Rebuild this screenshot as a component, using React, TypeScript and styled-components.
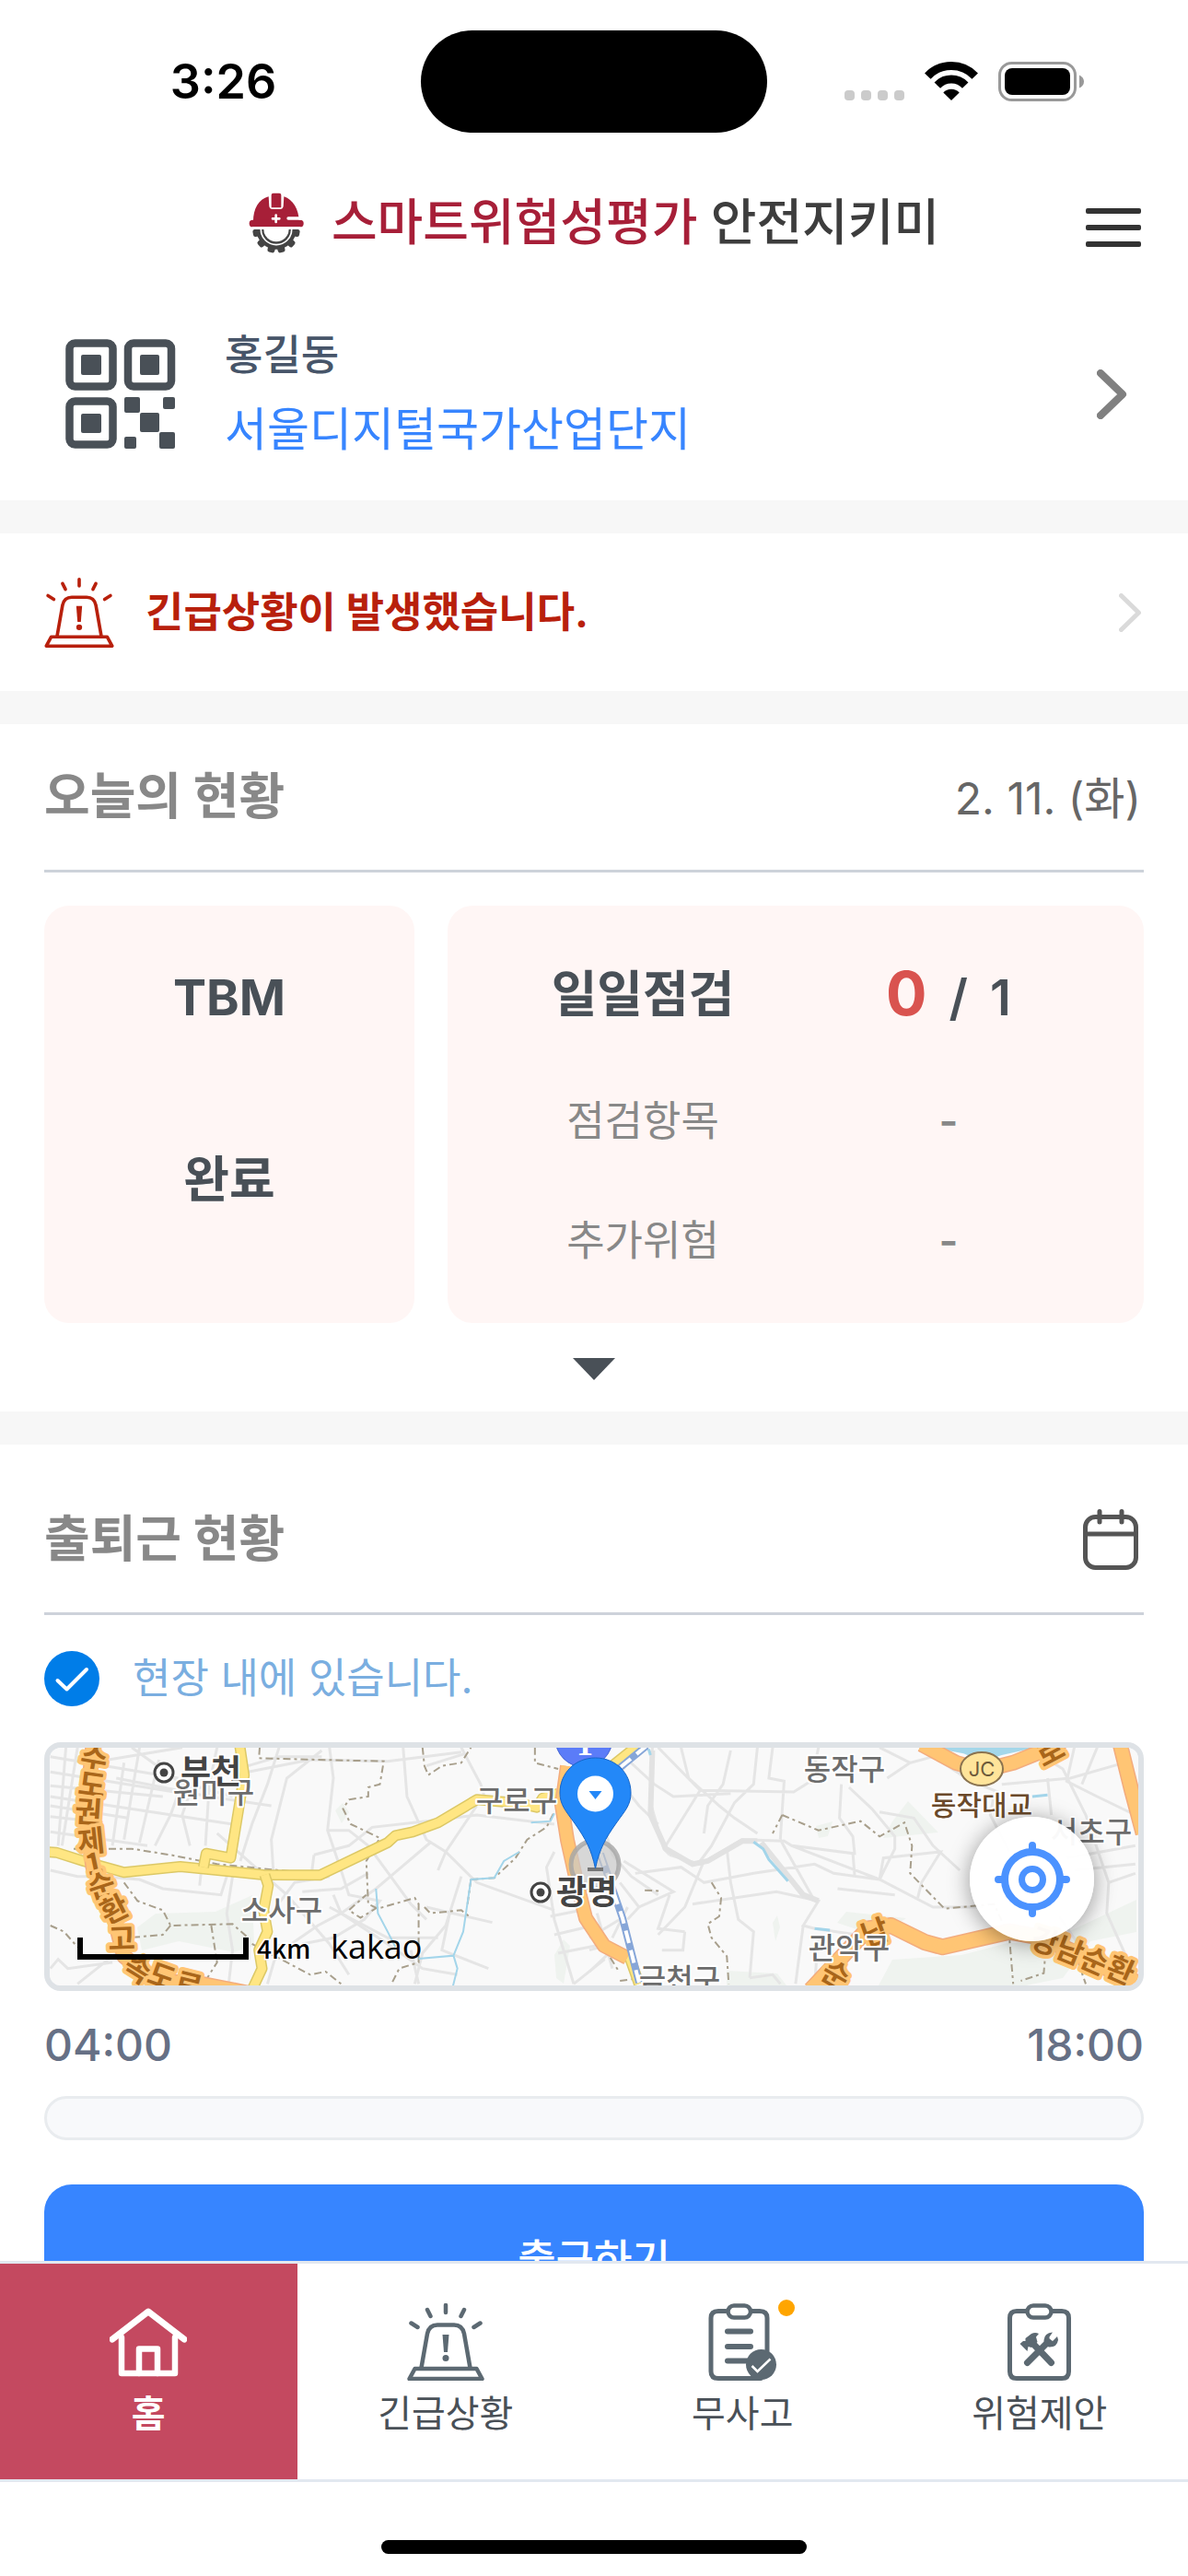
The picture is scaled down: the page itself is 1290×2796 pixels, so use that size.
import React from "react";
import styled, { createGlobalStyle } from "styled-components";

const sans = `"Inter", "Noto Sans CJK KR", sans-serif`;
const korean = `"Noto Sans CJK KR", sans-serif`;

const GlobalStyle = createGlobalStyle`
  *, *::before, *::after { box-sizing: border-box; }
  body { margin: 0; background: #fff; font-family: ${sans}; }
  h1, h2, p { margin: 0; }
  button { border: 0; padding: 0; background: none; font: inherit; color: inherit; cursor: pointer; }
  svg { display: block; flex: none; }
`;

/* ---------- shell ---------- */

const Screen = styled.div`
  display: flex;
  flex-direction: column;
  height: 100vh;
  background: #fff;
  overflow: hidden;
`;

const Content = styled.main`
  flex: 1;
  min-height: 0;
  overflow-y: auto;
  scrollbar-width: none;
`;

const StatusBar = styled.div`
  flex: none;
  display: grid;
  grid-template-columns: 1fr auto 1fr;
  align-items: center;
  height: 177px;
`;

const Clock = styled.time`
  padding-left: 28px;
  text-align: center;
  font-size: 52px;
  font-weight: 600;
  line-height: 64px;
  color: #000;
`;

const Island = styled.div`
  width: 376px;
  height: 111px;
  border-radius: 56px;
  background: #000;
`;

const StatusIcons = styled.div`
  display: flex;
  align-items: center;
  justify-content: flex-end;
  gap: 22px;
  padding-right: 112px;
`;

const AppHeader = styled.header`
  flex: none;
  display: grid;
  grid-template-columns: 1fr auto 1fr;
  align-items: center;
  height: 130px;
  padding: 0 48px;
`;

const Brand = styled.div`
  grid-column: 2;
  display: flex;
  align-items: center;
  gap: 30px;
`;

const BrandName = styled.h1`
  font-size: 54px;
  font-weight: 500;
  line-height: 72px;
  color: #3d3d3d;
  white-space: nowrap;
`;

const BrandAccent = styled.span`
  color: #a71f38;
`;

const MenuButton = styled.button`
  justify-self: end;
  padding: 9px 3px 0;
`;

/* ---------- sections ---------- */

const Section = styled.section`
  padding: 0 48px;
  & + & {
    border-top: 36px solid #f7f7f7;
  }
`;

const ProfileLink = styled.a`
  display: flex;
  align-items: center;
  gap: 53px;
  height: 236px;
  padding: 6px 18px 0 23px;
  text-decoration: none;
`;

const ProfileText = styled.div`
  flex: 1;
  padding-bottom: 4px;
  line-height: 80px;
`;

const UserName = styled.p`
  font-size: 45px;
  font-weight: 500;
  color: #475569;
`;

const SiteName = styled.p`
  font-size: 50px;
  font-weight: 400;
  color: #3785ff;
`;

const AlertLink = styled.a`
  display: flex;
  align-items: center;
  gap: 34px;
  height: 171px;
  padding-right: 2px;
  text-decoration: none;
  color: #b8200c;
`;

const AlertText = styled.span`
  flex: 1;
  font-size: 45px;
  font-weight: 700;
  line-height: 60px;
`;

const SectionHeader = styled.header<{ $spaced?: boolean }>`
  display: flex;
  align-items: center;
  justify-content: space-between;
  height: 161px;
  margin-top: ${(p) => (p.$spaced ? 24 : 0)}px;
  padding-right: 3px;
  border-bottom: 3px solid #cdd2da;
`;

const SectionTitle = styled.h2`
  font-size: 54px;
  font-weight: 700;
  line-height: 72px;
  color: #888;
`;

const DateText = styled.time`
  padding-top: 3px;
  font-size: 48px;
  line-height: 72px;
  color: #666;
`;

const IconButton = styled.button`
  padding: 0 3px;
`;

/* ---------- today cards ---------- */

const Cards = styled.div`
  display: grid;
  grid-template-columns: 402fr 756fr;
  gap: 36px;
  padding-top: 36px;
`;

const Card = styled.div<{ $rows: string; $columns: string }>`
  display: grid;
  grid-template-columns: ${(p) => p.$columns};
  grid-template-rows: ${(p) => p.$rows};
  align-items: center;
  justify-items: center;
  padding: 24px 46px;
  border-radius: 27px;
  background: #fff6f5;
`;

const CardTitle = styled.span`
  font-size: 54px;
  font-weight: 700;
  line-height: 72px;
  color: #495057;
`;

const CardItem = styled.span`
  font-size: 45px;
  line-height: 60px;
  color: #888;
`;

const CardValue = styled(CardItem)`
  font-weight: 600;
`;

const Tally = styled.span`
  display: flex;
  align-items: baseline;
  gap: 24px;
  font-size: 54px;
  font-weight: 600;
  line-height: 72px;
  color: #495057;
`;

const TallyDone = styled.span`
  font-size: 66px;
  font-weight: 700;
  color: #d9534f;
`;

const ExpandButton = styled.button`
  display: grid;
  place-items: center;
  width: 100%;
  height: 96px;
  padding-top: 3px;
`;

/* ---------- attendance ---------- */

const SiteStatus = styled.p`
  display: flex;
  align-items: center;
  gap: 36px;
  height: 138px;
  font-size: 45px;
  line-height: 60px;
  color: #7aaee0;
`;

const MapFrame = styled.div`
  position: relative;
  height: 270px;
  border: 6px solid #dee2e6;
  border-radius: 18px;
  background: #f9f9f9;
  overflow: hidden;
`;

const MapDrawing = styled.svg`
  width: 100%;
  height: 100%;
  font-family: ${korean};
`;

const LocateButton = styled.button`
  position: absolute;
  right: 48px;
  bottom: 48px;
  display: grid;
  place-items: center;
  width: 135px;
  height: 135px;
  border-radius: 50%;
  background: rgba(255, 255, 255, 0.96);
  box-shadow: 0 3px 24px rgba(0, 0, 0, 0.4);
`;

const Hours = styled.div`
  display: flex;
  align-items: center;
  justify-content: space-between;
  height: 114px;
  padding-top: 3px;
  font-size: 48px;
  font-weight: 500;
  line-height: 60px;
  color: #667085;
`;

const Track = styled.div`
  height: 48px;
  border: 3px solid #e9ecef;
  border-radius: 24px;
  background: #f8f9fb;
`;

const CheckInButton = styled.button`
  width: 100%;
  height: 164px;
  margin: 48px 0;
  border-radius: 30px;
  background: #3785ff;
  color: #fff;
  font-size: 45px;
  font-weight: 500;
  line-height: 60px;
`;

/* ---------- tab bar ---------- */

const TabBar = styled.nav`
  flex: none;
  display: grid;
  grid-template-columns: repeat(4, 1fr);
  height: 240px;
  border-top: 3px solid #e2e8f0;
  border-bottom: 3px solid #e2e8f0;
  background: #fff;
`;

const Tab = styled.a<{ $active?: boolean }>`
  display: flex;
  flex-direction: column;
  align-items: center;
  gap: 12px;
  padding-top: 43px;
  background: ${(p) => (p.$active ? "#c44960" : "transparent")};
  color: ${(p) => (p.$active ? "#fff" : "#5c6972")};
  text-decoration: none;
`;

const TabIcon = styled.span`
  position: relative;
`;

const TabLabel = styled.span<{ $active?: boolean }>`
  font-size: 40px;
  font-weight: ${(p) => (p.$active ? 700 : 400)};
  line-height: 48px;
  color: ${(p) => (p.$active ? "#fff" : "#495057")};
`;

const Badge = styled.span`
  position: absolute;
  top: -4px;
  left: 81px;
  width: 18px;
  height: 18px;
  border-radius: 50%;
  background: #ffa500;
`;

const HomeArea = styled.div`
  flex: none;
  display: flex;
  align-items: center;
  justify-content: center;
  height: 102px;
  padding-top: 39px;
`;

const HomeIndicator = styled.div`
  width: 462px;
  height: 15px;
  border-radius: 8px;
  background: #000;
`;

/* ---------- icons ---------- */

const CellDots = () => (
  <svg width="65" height="43" viewBox="0 0 65 43" fill="#cbcbcb" aria-hidden="true">
    {[0, 18, 36, 54].map((x) => (
      <rect key={x} x={x} y="31" width="11" height="11" rx="4" />
    ))}
  </svg>
);

const Wifi = () => (
  <svg width="58" height="43" viewBox="0 0 58 43" aria-hidden="true">
    <g fill="none" stroke="#000" strokeWidth="9">
      <path d="M3.3 15.6A35.5 35.5 0 0 1 54.7 15.6" />
      <path d="M13.8 25.6A21 21 0 0 1 44.2 25.6" />
    </g>
    <path d="M29 42L20.3 33.4A12 12 0 0 1 37.7 33.4Z" />
  </svg>
);

const Battery = () => (
  <svg width="94" height="43" viewBox="0 0 94 43" aria-hidden="true">
    <rect x="1.5" y="1.5" width="82" height="40" rx="13" fill="none" stroke="#999" strokeWidth="3" />
    <rect x="7" y="7" width="71" height="29" rx="8" />
    <path d="M88 14.5Q93 17 93 21.500T88 28.500Z" fill="#999" />
  </svg>
);

const HelmetLogo = () => (
  <svg width="60" height="66" viewBox="36 43 180 198" aria-hidden="true">
    <g fill="#a71f38">
      <path d="M51 136C51 98 68 64 101 56L103 88Q105 97 113 97H139Q147 97 149 88L151 56C180 66 200 98 200 136Z" />
      <path d="M110 92V51Q110 45 116 45H136Q142 45 142 51V92Z" />
      <rect x="38" y="132" width="177" height="23" rx="11" />
    </g>
    <path d="M125 117V139M114 128H136" stroke="#fff" strokeWidth="8" strokeLinecap="round" />
    <path d="M165 127H204" stroke="#fff" strokeWidth="10" strokeLinecap="round" />
    <g fill="#444">
      <path d="M61 163A65 65 0 0 0 191 163Z" />
      {[10, 43, 76, 104, 137, 170].map((angle) => (
        <rect key={angle} x="180" y="151" width="23" height="24" rx="7" transform={`rotate(${angle} 126 163)`} />
      ))}
    </g>
    <path d="M48 155H204V163H48Z" fill="#fff" />
    <path d="M76 163A50 50 0 0 0 176 163" fill="none" stroke="#fff" strokeWidth="5" />
    <path d="M85 162A41 41 0 0 0 167 162Z" fill="#fff" />
  </svg>
);

const MenuIcon = () => (
  <svg width="60" height="42" viewBox="0 0 60 42" fill="#333" aria-hidden="true">
    <rect width="60" height="6" rx="2" />
    <rect y="18" width="60" height="6" rx="2" />
    <rect y="36" width="60" height="6" rx="2" />
  </svg>
);

const QrIcon = () => (
  <svg width="120" height="120" viewBox="0 0 120 120" fill="#495057" aria-hidden="true">
    <g fill="none" stroke="#495057" strokeWidth="8.500">
      <rect x="4.500" y="4.500" width="47" height="47" rx="6" />
      <rect x="68" y="4.500" width="47" height="47" rx="6" />
      <rect x="4.500" y="67.500" width="47" height="47" rx="6" />
    </g>
    <rect x="17" y="17" width="22" height="22" rx="2" />
    <rect x="81" y="17" width="21" height="22" rx="2" />
    <rect x="17" y="81" width="22" height="21" rx="2" />
    <rect x="64" y="63" width="17" height="17" rx="2" />
    <rect x="106" y="63" width="13" height="13" rx="2" />
    <rect x="81" y="80" width="21" height="21" rx="2" />
    <rect x="64" y="106" width="13" height="13" rx="2" />
    <rect x="102" y="101" width="17" height="18" rx="2" />
  </svg>
);

const ChevronIcon = ({ width, height, weight, color }: { width: number; height: number; weight: number; color: string }) => (
  <svg width={width} height={height} viewBox={`0 0 ${width} ${height}`} aria-hidden="true">
    <path
      d={`M${weight / 2} ${weight / 2}L${width - weight / 2 - 1} ${height / 2}L${weight / 2} ${height - weight / 2}`}
      fill="none"
      stroke={color}
      strokeWidth={weight}
      strokeLinecap="round"
      strokeLinejoin="round"
    />
  </svg>
);

const SirenIcon = ({ size, weight }: { size: number; weight: number }) => (
  <svg width={size} height={size} viewBox="0 0 84 84" fill="none" stroke="currentColor" strokeWidth={weight} aria-hidden="true">
    <path strokeLinecap="round" d="M42 2V10M22 7L25.500 14M62 7L58.500 14M4.500 21.500L11.500 26M79.500 21.500L72.500 26" />
    <path d="M15.500 70L22 33Q24 23.500 33 23.500H51Q60 23.500 62 33L68.500 70" />
    <path d="M8.500 71H75.500L81.500 82H2.500Z" strokeLinejoin="round" />
    <path d="M38.500 34H45.500L44 53H40Z" fill="currentColor" stroke="none" />
    <circle cx="42" cy="59.500" r="3.500" fill="currentColor" stroke="none" />
  </svg>
);

const CaretDown = () => (
  <svg width="46" height="24" viewBox="0 0 46 24" fill="#495057" aria-hidden="true">
    <path d="M0 0H46L23 24Z" />
  </svg>
);

const CalendarIcon = () => (
  <svg width="60" height="66" viewBox="0 0 60 66" fill="none" stroke="#555" strokeWidth="5" strokeLinecap="round" aria-hidden="true">
    <rect x="2.500" y="8.500" width="55" height="55" rx="11" />
    <path d="M3 27H57M18 2.500V14M42 2.500V14" />
  </svg>
);

const CheckIcon = () => (
  <svg width="60" height="60" viewBox="0 0 60 60" aria-hidden="true">
    <circle cx="30" cy="30" r="30" fill="#007de8" />
    <path d="M14.500 32L24.500 41.500L46 20" fill="none" stroke="#fff" strokeWidth="4" strokeLinecap="round" strokeLinejoin="round" />
  </svg>
);

const TargetIcon = () => (
  <svg width="84" height="84" viewBox="0 0 84 84" fill="none" stroke="#4b92ff" strokeLinecap="round" aria-hidden="true">
    <circle cx="42" cy="42" r="30" strokeWidth="8" />
    <circle cx="42" cy="42" r="11.500" strokeWidth="7" />
    <path d="M42 5V11M42 73V79M5 42H11M73 42H79" strokeWidth="8" />
  </svg>
);

const HomeIcon = () => (
  <svg width="84" height="84" viewBox="0 0 84 84" fill="none" stroke="currentColor" strokeLinecap="round" strokeLinejoin="round" aria-hidden="true">
    <path d="M3 39L42 9L81 39" strokeWidth="7" />
    <path d="M13 37V76H71V37" strokeWidth="6.500" />
    <path d="M32 76V49.500H52V76" strokeWidth="6.500" />
  </svg>
);

const ReportIcon = () => (
  <svg width="84" height="84" viewBox="0 0 84 84" fill="none" stroke="currentColor" strokeWidth="5" strokeLinecap="round" aria-hidden="true">
    <path d="M24 8.500H16Q8 8.500 8 16V74Q8 81.500 16 81.500H62M53 8.500H61Q69 8.500 69 16V52" />
    <rect x="26.500" y="2.500" width="24.500" height="13" rx="6.500" strokeWidth="4.500" />
    <path d="M26 30.500H51M26 47H51M26 62.500H50" strokeWidth="6" />
    <circle cx="62.500" cy="66.500" r="16.500" fill="currentColor" stroke="none" />
    <path d="M52.500 68L58.500 74L72.500 60.500" stroke="#fff" strokeWidth="2.500" strokeLinecap="butt" />
  </svg>
);

const SuggestIcon = () => (
  <svg width="84" height="84" viewBox="0 0 84 84" fill="none" stroke="currentColor" strokeWidth="5" strokeLinecap="round" aria-hidden="true">
    <path d="M27 8.500H17Q9.500 8.500 9.500 16V74Q9.500 81.500 17 81.500H66Q73.500 81.500 73.500 74V16Q73.500 8.500 66 8.500H56" />
    <rect x="28.500" y="2.500" width="26" height="13" rx="6.500" strokeWidth="4.500" />
    <path d="M34 43L54.500 64.500M28.500 64.500L51 42" strokeWidth="7" />
    <path d="M20.500 44L24 41H26.500V38L33 33Q37 31 41 33L38 36.500L39.500 42L33 48L29.500 47L28.500 52Z" fill="currentColor" stroke="none" />
    <path
      d="M56 31.500Q47 32 46.500 40Q46.500 46 52 47.500Q61 48 62 39.500L61 36L56 41L52.500 38.500L52.500 36.500Z"
      fill="currentColor"
      stroke="none"
    />
  </svg>
);

/* ---------- map ---------- */

type Point = [number, number];
type Place = { name: string; x: number; y: number; size?: number; bold?: boolean; color?: string };
type RoadLetter = { char: string; x: number; y: number; angle: number };

const line = (points: Point[]) => "M" + points.map((p) => p.join(" ")).join("L");

const westStreets = [
  "M130 110L460 180M130 160L450 225M130 205L420 240M130 240L600 330M130 270L330 310M130 305L200 315M130 355L380 400M170 80L150 400M200 80L160 400M320 130L290 400M360 80L320 380M410 120L360 390M460 230L440 300L400 400M500 190L470 300L490 400M280 120L470 80M300 180L540 240L700 270M340 80L460 190L600 240M560 80L540 200L530 400",
  "M640 160L800 120L1000 125L1190 95M720 80L690 200L650 330L620 450M830 90L740 180L700 380L705 480M850 80L860 180L845 350L880 480M640 140L720 110L830 110M560 360L650 460L740 560L850 720L900 820",
  "M130 480L200 500L260 500L360 510L420 540L570 560L590 480M600 500L585 620L600 740L590 850M520 470L515 530M810 430L900 400L960 340L1100 320L1230 300L1430 330M810 430L805 480M845 350L900 350L950 400L1060 590L1100 640",
  "M1040 80L1050 240L1100 380L1150 420L1230 520L1430 610M1190 80L1240 200L1250 240M1100 140L1200 100M1110 390L970 540L880 620L820 660L740 730M1230 270L1150 420L1130 480M880 480L900 560L980 580L940 640L860 700L780 720M780 550L880 540L950 490M860 560L880 620L1000 720L1090 800L1180 820M1060 740L1080 850M1160 620L1140 740L1260 800",
  "M700 620L760 520L850 500M720 720L690 850M850 600L1000 700L1130 700M1100 600L1270 650M1190 500L1150 660L1090 750L1070 850M130 800L150 770L175 800L290 780M200 850L310 740M1430 420L1410 470L1430 640L1480 850M1420 630L1500 610M1430 690L1530 660M1440 750L1560 720M1480 850L1560 770",
];

const eastStreets = [
  "M165 80L160 260L195 410L210 430M100 120L170 200L220 240L370 230M60 160L130 270L180 330M130 80L60 200L30 300M240 80L260 180L340 270L380 310L440 360M180 80L290 220L535 225L580 190M290 220L230 340L200 400M370 90L350 200L310 270L300 360M440 80L430 200L380 260L320 400L290 450M480 80L470 180L510 190L500 380",
  "M210 430L290 460L400 380L510 385L530 400L760 510L900 600L1030 600M90 450L220 550L130 600M120 490L240 470L300 520L430 490L590 460L640 490L760 510M270 590L490 550L600 580L560 660L590 670L700 690M360 410L370 520L390 640L430 680L420 830M500 380L590 580M530 400L690 425L695 500M210 560L180 670L250 680M180 690L250 600L300 450M190 740L245 740L250 680",
  "M660 200L655 310L690 370L695 430M680 210L740 280L800 370L800 410L760 510M760 290L850 310L900 400L970 480M760 510L770 440L920 420L870 520L860 570M650 540L800 560M600 80L580 200M760 80L840 130L900 110M900 110L1000 190L1080 230M840 130L780 180",
  "M1080 200L1260 180L1400 130M1150 80L1240 150L1300 300L1360 520L1355 620L1420 800M1200 180L1210 300M1270 80L1250 190L1330 240L1430 300M1330 80L1290 200M1250 440L1430 400M1270 480L1430 460M1360 520L1430 490M1060 230L1050 300L1100 420M1280 720L1230 630",
  "M30 300L60 430L110 500L180 560M80 520L130 600L100 640M100 600L60 700M500 850L480 820L420 830M560 660L540 850M600 690L590 850M20 620L60 800M0 700L80 640M0 740L60 720M0 810L60 740",
];

const westBorders = [
  "M670 80L668 115L820 120L990 125L980 200L950 210L950 240L900 250L885 280L905 330L980 375L945 450L950 590L975 605L1070 570L1080 590L1080 780L1030 800L1010 850",
  "M975 600L930 635L900 610L945 560M1090 80L1095 140L1105 170L1140 140L1190 130L1215 80M1095 600L1110 620L1190 610L1210 630",
  "M190 410L340 410L440 430L560 460L800 490M320 520L355 580L420 610L440 660L600 655L640 700M545 660L560 780L530 840M440 660L420 690L330 700M130 660L165 680L200 730M650 720L800 820L840 810L880 850",
  "M1215 510L1275 505L1330 440L1360 380L1410 340L1430 290M1380 80L1380 130L1440 150M1215 510L1205 600",
];

const eastBorders = [
  "M505 300L600 350L710 320L760 370L825 325L845 400L840 490L930 605L1060 590L1100 700L1110 850",
  "M505 300L480 360M320 520L345 570L340 630L310 655L320 700L360 760L365 850M145 545L190 548M1195 740L1190 815L1130 840M1280 780L1300 850M55 765L75 805M80 840L110 835",
];

const westHighway = line([[240, 70], [222, 300], [240, 470], [290, 610], [320, 760], [400, 840], [520, 850], [640, 880]]);
const westAvenues = [
  line([[120, 420], [145, 422], [215, 450], [320, 487], [465, 468], [680, 495], [825, 496], [1000, 390], [1020, 367], [1065, 355], [1130, 325], [1230, 250], [1340, 262], [1385, 275], [1400, 245], [1440, 230]]),
  line([[618, 70], [630, 170], [595, 440], [532, 425], [525, 470]]),
  line([[683, 495], [692, 530], [680, 610], [690, 680], [668, 740], [676, 800], [650, 870]]),
];

const centralHighway = line([[562, 20], [556, 62], [562, 100], [572, 145], [582, 185], [602, 215], [627, 228]]);

const places: Place[] = [
  { name: "원미구", x: 178, y: 60 },
  { name: "부천", x: 175, y: 39, size: 36, bold: true, color: "#444" },
  { name: "구로구", x: 507, y: 69 },
  { name: "소사구", x: 252, y: 188 },
  { name: "광명", x: 583, y: 170, size: 36, bold: true, color: "#444" },
  { name: "금천구", x: 684, y: 263 },
  { name: "동작구", x: 863, y: 35 },
  { name: "동작대교", x: 1012, y: 73, size: 30, color: "#6b4a2b" },
  { name: "서초구", x: 1131, y: 103 },
  { name: "관악구", x: 868, y: 229 },
];

const roadLetters: RoadLetter[] = [
  { char: "수", x: 48, y: 12, angle: 10 },
  { char: "도", x: 46, y: 40, angle: 8 },
  { char: "권", x: 42, y: 69, angle: 4 },
  { char: "제", x: 45, y: 101, angle: -6 },
  { char: "1", x: 48, y: 125, angle: -12 },
  { char: "순", x: 56, y: 149, angle: -18 },
  { char: "환", x: 70, y: 175, angle: -26 },
  { char: "고", x: 78, y: 207, angle: -2 },
  { char: "속", x: 96, y: 240, angle: 32 },
  { char: "도", x: 122, y: 248, angle: 20 },
  { char: "로", x: 151, y: 257, angle: 14 },
  { char: "남", x: 896, y: 200, angle: -20 },
  { char: "순", x: 854, y: 246, angle: 30 },
  { char: "로", x: 1086, y: 4, angle: -28 },
  { char: "강", x: 1081, y: 210, angle: 18 },
  { char: "남", x: 1108, y: 220, angle: 22 },
  { char: "순", x: 1135, y: 231, angle: 24 },
  { char: "환", x: 1163, y: 241, angle: 24 },
];

const Road = ({ d, fill, edge, width }: { d: string; fill: string; edge: string; width: number }) => (
  <g fill="none" strokeLinejoin="round">
    <path d={d} stroke={edge} strokeWidth={width} vectorEffect="non-scaling-stroke" />
    <path d={d} stroke={fill} strokeWidth={width - 3} vectorEffect="non-scaling-stroke" />
  </g>
);

const Lines = ({ paths, color, width, dash }: { paths: string[]; color: string; width: number; dash?: string }) => (
  <g fill="none" stroke={color} strokeWidth={width} strokeDasharray={dash}>
    {paths.map((d) => (
      <path key={d} d={d} vectorEffect="non-scaling-stroke" />
    ))}
  </g>
);

const CityMark = ({ x, y }: { x: number; y: number }) => (
  <g>
    <circle cx={x} cy={y} r="10" fill="#fff" stroke="#444" strokeWidth="3" />
    <circle cx={x} cy={y} r="4.500" fill="#444" />
  </g>
);

const SiteMap = () => (
  <MapDrawing viewBox="0 0 1182 258" preserveAspectRatio="xMidYMid slice" role="img" aria-label="현장 지도">
    <rect width="1182" height="258" fill="#f9f9f9" />

    {/* parks */}
    <g fill="#eff3ef">
      <path d="M95 195L115 180L180 178L220 160L222 215L200 222L140 210L100 220Z" />
      <path d="M310 68L318 60L325 70L317 82ZM548 225L558 208L565 215L558 256L550 250Z" />
      <path d="M832 85L850 80L845 96L835 98ZM915 80L932 58L965 92L905 98ZM855 190L865 178L930 185L900 205ZM785 190L790 182L793 195L788 210Z" />
      <path d="M735 242L790 245L800 258H735ZM900 258L915 230L990 225L1040 212L1080 212L1180 165V200L1130 210L1100 250L1060 258Z" />
    </g>

    <g transform="translate(-54 -27) scale(0.4209 0.3333)">
      <Lines paths={westStreets} color="#e5e5e5" width={3} />
      <Lines paths={westBorders} color="#a89f8c" width={2} dash="8 4 3 4" />
      <Lines
        paths={["M970 540L975 620L1000 680L1020 730M1080 768L1170 758L1180 800L1168 860M1170 758L1195 680L1215 510L1275 505L1300 450L1340 420M1370 325L1420 320L1430 295"]}
        color="#a3d5ea"
        width={2}
      />
      {westAvenues.map((d) => (
        <Road key={d} d={d} fill="#ffe683" edge="#dcc866" width={12} />
      ))}
      <Road d={westHighway} fill="#ffc574" edge="#f3ac7d" width={17} />
    </g>

    <g transform="translate(586 -27) scale(0.4146 0.3333)">
      <Lines paths={eastStreets} color="#e5e5e5" width={3} />
      <Lines paths={["M165 90L160 300L200 410L270 460L310 450L400 385L440 385M450 390L560 560L600 580"]} color="#e2e2e2" width={6} />
      <Lines paths={eastBorders} color="#a89f8c" width={2} dash="8 4 3 4" />
      <Lines paths={["M430 388L455 410L470 445L520 515M590 670L630 675M1160 240L1200 235M155 85L160 105"]} color="#a3d5ea" width={3} />
      <path d="M895 80L980 100L1030 125L1080 105L1170 80Z" fill="#a4d7ea" />
      <Road d={line([[50, 150], [130, 70]])} fill="#ffe683" edge="#dcc866" width={12} />
      <Road d={line([[100, 745], [130, 850]])} fill="#ffe683" edge="#dcc866" width={12} />
      <Road d={line([[870, 70], [960, 130], [1030, 155], [1110, 130], [1200, 85], [1240, 60]])} fill="#ffc574" edge="#f3ac7d" width={17} />
      <Road d={line([[1390, 70], [1420, 220], [1450, 360]])} fill="#ffc574" edge="#f3ac7d" width={17} />
      <Road d={line([[580, 870], [640, 790], [730, 670], [790, 660], [880, 715], [925, 730], [1100, 680], [1190, 700], [1440, 850]])} fill="#ffc574" edge="#f3ac7d" width={18} />
    </g>

    {/* central expressway and railway */}
    <Road d={centralHighway} fill="#ffc574" edge="#f3ac7d" width={16} />
    <g fill="none">
      <path d="M648 -2L615 25M598 115L622 185L640 255" stroke="#86a6d8" strokeWidth="8" />
      <path d="M648 -2L615 25M598 115L622 185L640 255" stroke="#fff" strokeWidth="4" strokeDasharray="14 8" />
    </g>

    <g fontSize="32" fontWeight="700" fill="#a9661a" stroke="#ffc574" strokeWidth="8" strokeLinejoin="round" paintOrder="stroke" textAnchor="middle">
      {roadLetters.map((l) => (
        <text key={`${l.x}-${l.y}`} transform={`translate(${l.x} ${l.y}) rotate(${l.angle})`} dy="12">
          {l.char}
        </text>
      ))}
    </g>

    <circle cx="592" cy="127" r="26" fill="#c9c9c9" fillOpacity="0.7" stroke="#a5a5a5" strokeWidth="5" strokeOpacity="0.8" />
    <path d="M584 132H601" stroke="#777" strokeWidth="4" />

    <g textAnchor="middle" stroke="#fff" strokeWidth="4" strokeLinejoin="round" paintOrder="stroke">
      {places.map((p) => (
        <text key={p.name} x={p.x} y={p.y} fontSize={p.size ?? 32} fontWeight={p.bold ? 700 : 500} fill={p.color ?? "#6c6c6c"}>
          {p.name}
        </text>
      ))}
    </g>
    <CityMark x={124} y={27} />
    <CityMark x={533} y={157} />

    <ellipse cx="1012" cy="23" rx="23" ry="18" fill="#ffe49a" stroke="#8a7350" strokeWidth="2" />
    <text x="1012" y="31" textAnchor="middle" fontFamily="Inter" fontSize="22" fill="#6d5a3a">
      JC
    </text>

    <circle cx="580" cy="-10" r="31" fill="#5b7cf8" stroke="#3d5fd0" strokeWidth="1" />
    <text x="581" y="8" textAnchor="middle" fontFamily="Liberation Serif" fontWeight="700" fontSize="36" fill="#fff">
      1
    </text>

    <path
      d="M592.500 131C588 110 582 99 570 82C560 68 554 62 554 49C554 27 571 11 592.500 11S631 27 631 49C631 62 625 68 615 82C603 99 597 110 592.500 131Z"
      fill="#2388f8"
      stroke="#1565c8"
      strokeWidth="1"
    />
    <circle cx="592.500" cy="50" r="19.500" fill="#fff" />
    <path d="M585.500 47H599.500L592.500 56Z" fill="#2388f8" />

    <path d="M33 206V227H213V206" fill="none" stroke="#000" strokeWidth="6" />
    <text x="225" y="229" fontSize="28" fontWeight="500" fill="#000" stroke="#fff" strokeWidth="3" paintOrder="stroke">
      4km
    </text>
    <text x="305" y="229" fontFamily="Open Sans" fontSize="36" fontWeight="500" fill="#000">
      kakao
    </text>
  </MapDrawing>
);

/* ---------- page ---------- */

const tabs = [
  { label: "홈", icon: <HomeIcon />, active: true },
  { label: "긴급상황", icon: <SirenIcon size={84} weight={4.5} /> },
  { label: "무사고", icon: <ReportIcon />, badge: true },
  { label: "위험제안", icon: <SuggestIcon /> },
];

export default function App() {
  return (
    <Screen>
      <GlobalStyle />
      <StatusBar>
        <Clock>3:26</Clock>
        <Island />
        <StatusIcons>
          <CellDots />
          <Wifi />
          <Battery />
        </StatusIcons>
      </StatusBar>

      <AppHeader>
        <Brand>
          <HelmetLogo />
          <BrandName>
            <BrandAccent>스마트위험성평가</BrandAccent> 안전지키미
          </BrandName>
        </Brand>
        <MenuButton type="button" aria-label="메뉴">
          <MenuIcon />
        </MenuButton>
      </AppHeader>

      <Content>
        <Section>
          <ProfileLink href="#profile">
            <QrIcon />
            <ProfileText>
              <UserName>홍길동</UserName>
              <SiteName>서울디지털국가산업단지</SiteName>
            </ProfileText>
            <ChevronIcon width={33} height={54} weight={8} color="#808080" />
          </ProfileLink>
        </Section>

        <Section>
          <AlertLink href="#emergency">
            <SirenIcon size={76} weight={4} />
            <AlertText>긴급상황이 발생했습니다.</AlertText>
            <ChevronIcon width={25} height={42} weight={5} color="#dadada" />
          </AlertLink>
        </Section>

        <Section>
          <SectionHeader>
            <SectionTitle>오늘의 현황</SectionTitle>
            <DateText>2. 11. (화)</DateText>
          </SectionHeader>
          <Cards>
            <Card $columns="1fr" $rows="152px 244px">
              <CardTitle>TBM</CardTitle>
              <CardTitle>완료</CardTitle>
            </Card>
            <Card $columns="1fr 1fr" $rows="146px 128px 131px">
              <CardTitle>일일점검</CardTitle>
              <Tally>
                <TallyDone>0</TallyDone>
                <span>/</span>
                <span>1</span>
              </Tally>
              <CardItem>점검항목</CardItem>
              <CardValue>-</CardValue>
              <CardItem>추가위험</CardItem>
              <CardValue>-</CardValue>
            </Card>
          </Cards>
          <ExpandButton type="button" aria-label="펼치기">
            <CaretDown />
          </ExpandButton>
        </Section>

        <Section>
          <SectionHeader $spaced>
            <SectionTitle>출퇴근 현황</SectionTitle>
            <IconButton type="button" aria-label="달력">
              <CalendarIcon />
            </IconButton>
          </SectionHeader>
          <SiteStatus>
            <CheckIcon />
            현장 내에 있습니다.
          </SiteStatus>
          <MapFrame>
            <SiteMap />
            <LocateButton type="button" aria-label="현재 위치">
              <TargetIcon />
            </LocateButton>
          </MapFrame>
          <Hours>
            <time>04:00</time>
            <time>18:00</time>
          </Hours>
          <Track />
          <CheckInButton type="button">출근하기</CheckInButton>
        </Section>
      </Content>

      <TabBar>
        {tabs.map((tab) => (
          <Tab key={tab.label} href={`#${tab.label}`} $active={tab.active}>
            <TabIcon>
              {tab.icon}
              {tab.badge && <Badge />}
            </TabIcon>
            <TabLabel $active={tab.active}>{tab.label}</TabLabel>
          </Tab>
        ))}
      </TabBar>
      <HomeArea>
        <HomeIndicator />
      </HomeArea>
    </Screen>
  );
}
